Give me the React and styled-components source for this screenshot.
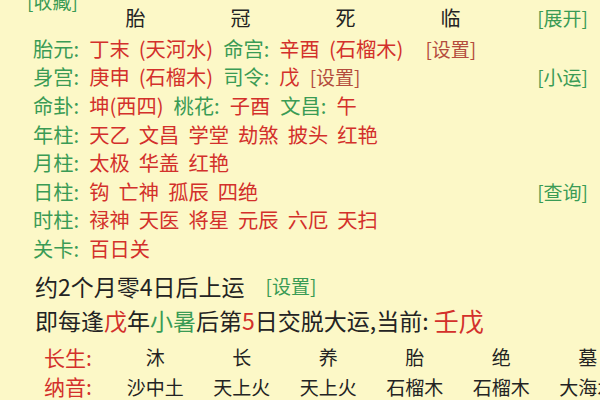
import React from "react";
import styled, { createGlobalStyle } from "styled-components";

const GREEN = "#3a9b55";
const RED = "#d3302b";
const BROWN = "#b44c3d";
const INK = "#232323";

const GlobalStyle = createGlobalStyle`
  html, body {
    margin: 0;
    padding: 0;
    background: #fcf8c7;
    overflow: hidden;
  }
  body {
    width: 600px;
    height: 400px;
    font-family: "Noto Sans CJK SC", "Noto Sans", sans-serif;
    color: ${INK};
  }
`;

const Page = styled.div`
  width: 600px;
  height: 400px;
  overflow: hidden;
  background: #fcf8c7;
`;

const Header = styled.div`
  display: flex;
  align-items: center;
  height: 34px;
  padding: 0 12px 0 27px;
`;

const Collect = styled.span`
  align-self: flex-start;
  width: 56px;
  margin-top: -10px;
  line-height: 22px;
  font-size: 19px;
  color: ${GREEN};
`;

const HeadCell = styled.span`
  width: 105px;
  text-align: center;
  font-size: 20px;
  color: ${INK};
`;

const Link = styled.span`
  font-size: 19px;
  color: ${(p) => (p.$tone === "brown" ? BROWN : GREEN)};
  margin-left: ${(p) => (p.$push ? "auto" : `${p.$shift || 0}px`)};
`;

const Row = styled.div`
  display: flex;
  align-items: center;
  height: 28.6px;
  padding: 0 12px 0 33px;
  gap: 10px;
  font-size: 20.25px;
  white-space: nowrap;
  word-spacing: 4.6px;
`;

const Label = styled.span`
  color: ${GREEN};
`;

const Value = styled.span`
  color: ${RED};
`;

const Line = styled.div`
  display: flex;
  align-items: center;
  height: 34px;
  margin-top: ${(p) => p.$top || 0}px;
  padding-left: 35px;
  font-size: 23px;
  white-space: nowrap;
  color: ${INK};
`;

const Mark = styled.span`
  color: ${(p) => (p.$green ? GREEN : RED)};
  font-size: ${(p) => p.$size || 23}px;
`;

const TableRow = styled.div`
  display: flex;
  align-items: center;
  height: ${(p) => p.$h}px;
  margin-top: ${(p) => p.$top || 0}px;
  padding-left: 44px;
  white-space: nowrap;
`;

const RowHead = styled.span`
  width: 68px;
  flex: none;
  font-size: 21px;
  color: ${RED};
`;

const Cell = styled.span`
  width: 86.5px;
  flex: none;
  text-align: center;
  font-size: 19px;
  color: ${INK};
`;

const rows = [
  {
    parts: [
      ["l", "胎元:"],
      ["v", "丁末 (天河水)"],
      ["l", "命宫:"],
      ["v", "辛酉 (石榴木)"],
      ["s", "[设置]", 12],
    ],
  },
  {
    parts: [
      ["l", "身宫:"],
      ["v", "庚申 (石榴木)"],
      ["l", "司令:"],
      ["v", "戊"],
      ["s", "[设置]"],
    ],
    side: "[小运]",
  },
  {
    parts: [
      ["l", "命卦:"],
      ["v", "坤(西四)"],
      ["l", "桃花:"],
      ["v", "子酉"],
      ["l", "文昌:"],
      ["v", "午"],
    ],
  },
  { parts: [["l", "年柱:"], ["v", "天乙 文昌 学堂 劫煞 披头 红艳"]] },
  { parts: [["l", "月柱:"], ["v", "太极 华盖 红艳"]] },
  { parts: [["l", "日柱:"], ["v", "钩 亡神 孤辰 四绝"]], side: "[查询]" },
  { parts: [["l", "时柱:"], ["v", "禄神 天医 将星 元辰 六厄 天扫"]] },
  { parts: [["l", "关卡:"], ["v", "百日关"]] },
];

const heads = ["胎", "冠", "死", "临"];
const changsheng = ["沐", "长", "养", "胎", "绝", "墓"];
const nayin = ["沙中土", "天上火", "天上火", "石榴木", "石榴木", "大海水"];

const Part = ({ kind, text, shift }) => {
  if (kind === "l") return <Label>{text}</Label>;
  if (kind === "s")
    return (
      <Link $tone="brown" $shift={shift}>
        {text}
      </Link>
    );
  return <Value>{text}</Value>;
};

export default function App() {
  return (
    <Page>
      <GlobalStyle />
      <Header>
        <Collect>[收藏]</Collect>
        {heads.map((h, i) => (
          <HeadCell key={i}>{h}</HeadCell>
        ))}
        <Link $push>[展开]</Link>
      </Header>

      {rows.map((r, i) => (
        <Row key={i}>
          {r.parts.map(([k, t, s], j) => (
            <Part key={j} kind={k} text={t} shift={s} />
          ))}
          {r.side && <Link $push>{r.side}</Link>}
        </Row>
      ))}

      <Line $top={6}>
        约2个月零4日后上运
        <Link $shift={21}>[设置]</Link>
      </Line>
      <Line>
        即每逢<Mark>戊</Mark>年<Mark $green>小暑</Mark>后第<Mark>5</Mark>
        日交脱大运,当前:&nbsp;<Mark $size={25}>壬戊</Mark>
      </Line>

      <TableRow $h={30} $top={5}>
        <RowHead>长生:</RowHead>
        {changsheng.map((c, i) => (
          <Cell key={i}>{c}</Cell>
        ))}
      </TableRow>
      <TableRow $h={29}>
        <RowHead>纳音:</RowHead>
        {nayin.map((c, i) => (
          <Cell key={i}>{c}</Cell>
        ))}
      </TableRow>
    </Page>
  );
}
